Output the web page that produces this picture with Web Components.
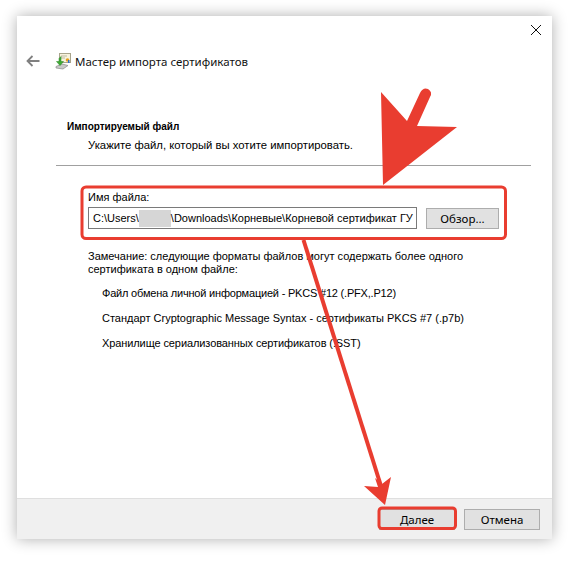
<!DOCTYPE html>
<html lang="ru">
<head>
<meta charset="utf-8">
<title>Мастер импорта сертификатов</title>
<style>
  html, body { margin: 0; background: #fff; }
  body { width: 573px; height: 561px; overflow: hidden; position: relative; font-family: "Liberation Sans", sans-serif; }
</style>
</head>
<body>
<wizard-window>
  <wizard-header slot="header">Мастер импорта сертификатов</wizard-header>
  <page-title>
    <span slot="title">Импортируемый файл</span>
    <span slot="sub">Укажите файл, который вы хотите импортировать.</span>
  </page-title>
  <file-picker label="Имя файла:" button="Обзор..."></file-picker>
  <format-note>
    <span slot="note">Замечание: следующие форматы файлов могут содержать более одного<br>сертификата в одном файле:</span>
    <span style="letter-spacing:-0.2px">Файл обмена личной информацией - PKCS #12 (.PFX,.P12)</span>
    <span>Стандарт Cryptographic Message Syntax - сертификаты PKCS #7 (.p7b)</span>
    <span style="letter-spacing:-0.1px">Хранилище сериализованных сертификатов (.SST)</span>
  </format-note>
  <wizard-button slot="footer" style="margin-right:9px">Далее</wizard-button>
  <wizard-button slot="footer">Отмена</wizard-button>
</wizard-window>
<red-marks></red-marks>

<script>
class WizardWindow extends HTMLElement {
  constructor() {
    super();
    this.attachShadow({ mode: "open" });
    this.shadowRoot.innerHTML = `
      <style>
        :host {
          display: flex;
          flex-direction: column;
          width: 535px;
          height: 523px;
          margin: 16px 0 0 17px;
          background: #fff;
          box-shadow: 0 0 14px rgba(0,0,0,0.32);
          color: #000;
        }
        .close {
          display: flex;
          justify-content: flex-end;
          padding: 9px 11px 0 0;
          height: 17px;
        }
        .body { flex: 1; }
        .footer {
          display: flex;
          justify-content: flex-end;
          align-items: flex-start;
          height: 41px;
          box-sizing: border-box;
          padding: 10px 12px 0 0;
          background: #f0f0f0;
          border-top: 1px solid #dfdfdf;
        }
      </style>
      <div class="close">
        <svg width="10" height="10" viewBox="0 0 10 10"><path d="M0 0 10 10M10 0 0 10" stroke="#111" stroke-width="1" fill="none"/></svg>
      </div>
      <slot name="header"></slot>
      <div class="body"><slot></slot></div>
      <div class="footer"><slot name="footer"></slot></div>
    `;
  }
}

class WizardHeader extends HTMLElement {
  constructor() {
    super();
    this.attachShadow({ mode: "open" });
    this.shadowRoot.innerHTML = `
      <style>
        :host {
          display: flex;
          align-items: center;
          height: 20px;
          margin-top: 9px;
          padding-left: 9px;
          font: 11.500px "Noto Sans", sans-serif;
          color: #111;
        }
        .back { margin-right: 15px; display: block; }
        .icon { margin-right: 4px; display: block; }
      </style>
      <svg class="back" width="14" height="12" viewBox="0 0 14 12">
        <path d="M6.500 1 1.500 6 6.500 11M1.500 6H13.500" stroke="#808080" stroke-width="1.800" fill="none"/>
      </svg>
      <svg class="icon" width="16" height="17" viewBox="0 0 16 17">
        <rect x="4.500" y="0.500" width="11" height="9" fill="#f7f2dc" stroke="#a8a48c"/>
        <path d="M6 3h6M6 5h4" stroke="#bdb9a4"/>
        <circle cx="12.500" cy="7" r="1.800" fill="#e2a020"/>
        <rect x="13" y="7" width="1.500" height="3" fill="#2f6fc4"/>
        <path d="M1 13.500 7 11 13 12.500 8 16 1 15z" fill="#c9c9c9" stroke="#8b8b8b" stroke-width="0.700"/>
        <path d="M6 3.500v5H8.500L5 12.500 1.500 8.500H4v-3z" fill="#3eab35" stroke="#27801f" stroke-width="0.500"/>
      </svg>
      <slot></slot>
    `;
  }
}

class PageTitle extends HTMLElement {
  constructor() {
    super();
    this.attachShadow({ mode: "open" });
    this.shadowRoot.innerHTML = `
      <style>
        :host {
          display: block;
          margin: 0 21px 0 39px;
          padding-top: 49px;
          height: 45px;
          border-bottom: 1px solid #a0a0a0;
          font: 11px "Liberation Sans", sans-serif;
        }
        .t { font: bold 10px/13px "Liberation Sans", sans-serif; padding-left: 11px; }
        .s { padding-left: 32px; margin-top: 5px; font: 11.300px/14px "Liberation Sans", sans-serif; }
      </style>
      <div class="t"><slot name="title"></slot></div>
      <div class="s"><slot name="sub"></slot></div>
    `;
  }
}

class FilePicker extends HTMLElement {
  constructor() {
    super();
    this.attachShadow({ mode: "open" });
    const label = this.getAttribute("label");
    const button = this.getAttribute("button");
    this.shadowRoot.innerHTML = `
      <style>
        :host {
          display: block;
          margin: 24px 0 0 71px;
          font: 11px "Liberation Sans", sans-serif;
        }
        .label { line-height: 15px; height: 17px; }
        .row { display: flex; align-items: flex-start; gap: 9px; }
        .field {
          box-sizing: border-box;
          width: 329px;
          height: 22px;
          border: 1px solid #7a7a7a;
          background: #fff;
          padding: 0 0 0 4px;
          line-height: 19px;
          white-space: nowrap;
          overflow: hidden;
          display: flex;
          align-items: center;
        }
        .hide {
          flex: none;
          width: 32px;
          height: 17px;
          background: #d6d6d6;
        }
        .btn {
          margin-top: 1px;
          box-sizing: border-box;
          width: 73px;
          height: 21px;
          border: 1px solid #adadad;
          background: #e1e1e1;
          text-align: center;
          font: 11.500px/19px "Noto Sans", sans-serif;
        }
      </style>
      <div class="label">${label}</div>
      <div class="row">
        <div class="field">C:\\Users\\<span class="hide"></span>\\Downloads\\Корневые\\Корневой сертификат ГУ</div>
        <div class="btn">${button}</div>
      </div>
    `;
  }
}

class FormatNote extends HTMLElement {
  constructor() {
    super();
    this.attachShadow({ mode: "open" });
    this.shadowRoot.innerHTML = `
      <style>
        :host {
          display: block;
          margin: 21px 0 0 71px;
          font: 11px/13px "Liberation Sans", sans-serif;
        }
        .items {
          display: flex;
          flex-direction: column;
          gap: 12px;
          margin: 11px 0 0 14px;
        }
        ::slotted(span) { display: block; white-space: nowrap; }
      </style>
      <slot name="note"></slot>
      <div class="items"><slot></slot></div>
    `;
  }
}

class WizardButton extends HTMLElement {
  constructor() {
    super();
    this.attachShadow({ mode: "open" });
    this.shadowRoot.innerHTML = `
      <style>
        :host {
          display: block;
          box-sizing: border-box;
          width: 76px;
          height: 21px;
          border: 1px solid #adadad;
          background: #e1e1e1;
          text-align: center;
          font: 11.500px/19px "Noto Sans", sans-serif;
        }
      </style>
      <slot></slot>
    `;
  }
}

// the red annotations drawn over the screenshot
class RedMarks extends HTMLElement {
  constructor() {
    super();
    this.attachShadow({ mode: "open" });
    this.shadowRoot.innerHTML = `
      <style>
        :host { position: absolute; left: 0; top: 0; width: 573px; height: 561px; pointer-events: none; }
        svg { display: block; }
      </style>
      <svg width="573" height="561" viewBox="0 0 573 561">
        <g fill="none" stroke="#e93d30">
          <rect x="82" y="187" width="423.500" height="51.500" rx="4" stroke-width="3"/>
          <rect x="379" y="508" width="76.500" height="20.500" rx="3" stroke-width="3"/>
          <path d="M303.500 240 381 486" stroke-width="4"/>
        </g>
        <g fill="#e93d30">
          <path d="M381 92 407 121 420 93Q423 87 428 89 433 92 430 97L417 126 457 127 383 185z"/>
          <path d="M364 486 378 487 375 478 382 484 391 477 385 505z"/>
        </g>
      </svg>
    `;
  }
}

customElements.define("wizard-window", WizardWindow);
customElements.define("wizard-header", WizardHeader);
customElements.define("page-title", PageTitle);
customElements.define("file-picker", FilePicker);
customElements.define("format-note", FormatNote);
customElements.define("wizard-button", WizardButton);
customElements.define("red-marks", RedMarks);
</script>
</body>
</html>
